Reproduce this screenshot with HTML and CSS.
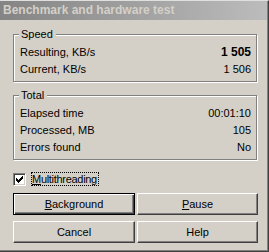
FILE: index.html
```html
<!DOCTYPE html>
<html lang="en">
<head>
    <meta charset="UTF-8">
    <title>Benchmark and hardware test</title>
    <link rel="stylesheet" href="styles.css">
</head>
<body>
    <div class="window">
        <div class="titlebar">Benchmark and hardware test</div>

        <div class="content">
            <div class="group">
                <span class="legend">Speed</span>
                <div class="row"><span>Resulting, KB/s</span><span class="strong">1 505</span></div>
                <div class="row"><span>Current, KB/s</span><span>1 506</span></div>
            </div>

            <div class="group group-total">
                <span class="legend">Total</span>
                <div class="row"><span>Elapsed time</span><span>00:01:10</span></div>
                <div class="row"><span>Processed, MB</span><span>105</span></div>
                <div class="row"><span>Errors found</span><span>No</span></div>
            </div>

            <label class="check">
                <span class="box">
                    <svg width="7" height="7" viewBox="0 0 7 7">
                        <path d="M0 2h1v1h1v1h1v-1h1v-1h1v-1h1v-1h1v3h-1v1h-1v1h-1v1h-1v1h-1v-1h-1v-1h-1z" fill="#000"/>
                    </svg>
                </span>
                <span class="focus"><u>M</u>ultithreading</span>
            </label>

            <div class="buttons">
                <button class="btn btn-default"><u>B</u>ackground</button>
                <button class="btn"><u>P</u>ause</button>
                <button class="btn">Cancel</button>
                <button class="btn">Help</button>
            </div>
        </div>
    </div>
</body>
</html>
```

FILE: styles.css
```css
body {
    margin: 0;
    font-family: "Liberation Sans", Arial, sans-serif;
    font-size: 11px;
    color: #000;
}
.window {
    width: 269px;
    height: 252px;
    box-sizing: border-box;
    background-color: #d4d0c8;
    border-top: 1px solid #dfdfdf;
    border-right: 1px solid #404040;
    border-bottom: 1px solid #404040;
    box-shadow: inset -1px -1px #808080;
}
.titlebar {
    height: 19px;
    margin-right: 1px;
    padding-left: 3px;
    line-height: 19px;
    font-size: 12px;
    font-weight: bold;
    color: #d4d0c8;
    background: linear-gradient(to right, #848484, #bcbcbc);
}
.content {
    padding: 14px 10px 0 13px;
}
.group {
    position: relative;
    margin-right: 1px;
    padding: 9px 5px 3px 6px;
    border: 1px solid #808080;
    box-shadow: inset 1px 1px #fff, 1px 1px #fff;
}
.group-total {
    margin-top: 13px;
}
.legend {
    position: absolute;
    top: -8px;
    left: 5px;
    padding: 0 3px 0 2px;
    line-height: 15px;
    background-color: #d4d0c8;
}
.row {
    display: flex;
    justify-content: space-between;
    height: 17px;
    line-height: 17px;
}
.strong {
    font-weight: bold;
    font-size: 12px;
}
.check {
    display: flex;
    align-items: center;
    gap: 5px;
    margin-top: 12px;
    height: 14px;
}
.box {
    display: flex;
    align-items: center;
    justify-content: center;
    width: 9px;
    height: 9px;
    background-color: #fff;
    border: 1px solid;
    border-color: #808080 #fff #fff #808080;
    box-shadow: inset 1px 1px #404040, inset -1px -1px #d4d0c8;
    padding: 1px;
}
.focus {
    padding: 0 1px 0 0;
    line-height: 12px;
    letter-spacing: -0.3px;
    border: 1px dotted #000;
}
.buttons {
    display: grid;
    grid-template-columns: 122px 121px;
    gap: 6px 2px;
    margin-top: 7px;
}
.btn {
    height: 22px;
    padding: 0;
    font-family: inherit;
    font-size: 11px;
    color: #000;
    background-color: #d4d0c8;
    border: 1px solid;
    border-color: #fff #404040 #404040 #fff;
    box-shadow: inset -1px -1px #808080;
}
.btn-default {
    border-color: #000;
    box-shadow: inset 1px 1px #fff, inset -1px -1px #404040, inset -2px -2px #808080;
}
```
